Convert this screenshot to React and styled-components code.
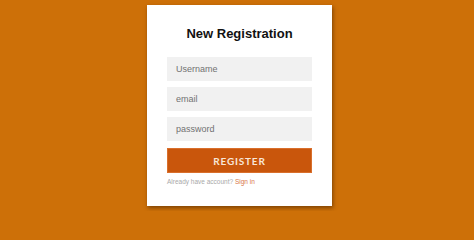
import React, { useCallback, useState } from "react"
import styled, { createGlobalStyle } from "styled-components"

const GlobalStyle = createGlobalStyle`
  html, body {
    margin: 0;
    padding: 0;
    background: #cd7008;
  }
  * {
    box-sizing: border-box;
  }
`

const Page = styled.div`
  width: 474px;
  height: 211px;
  display: flex;
  justify-content: center;
  align-items: flex-start;
  padding-top: 5px;
  padding-left: 5px;
  background: #cd7008;
  font-family: "Liberation Sans", Arial, sans-serif;
`

const Card = styled.div`
  width: 185px;
  height: 201px;
  background: #ffffff;
  box-shadow: 1px 2px 4px rgba(60, 30, 0, 0.55);
  display: flex;
  flex-direction: column;
  align-items: center;
  padding: 0 20px;
`

const Title = styled.h2`
  margin: 21px 0 15px;
  font-size: 13px;
  font-weight: bold;
  color: #111;
  line-height: 16px;
`

const Form = styled.form`
  width: 100%;
  display: flex;
  flex-direction: column;
  gap: 6px;
`

const Input = styled.input`
  width: 100%;
  height: 24px;
  border: none;
  outline: none;
  background: #f1f1f1;
  padding: 0 9px;
  font-family: "Liberation Sans", Arial, sans-serif;
  font-size: 9px;
  color: #555;
  &::placeholder {
    color: #727272;
  }
`

const Button = styled.button`
  margin-top: 1px;
  width: 100%;
  height: 25px;
  border: 1px solid #d96f2c;
  background: #c9560c;
  color: #f8e6d8;
  font-family: Lato, "Liberation Sans", sans-serif;
  font-weight: bold;
  font-size: 10px;
  letter-spacing: 0.8px;
  cursor: pointer;
`

const Footer = styled.div`
  width: 100%;
  margin-top: 5px;
  font-size: 6.5px;
  color: #a9a9a9;
`

const SignIn = styled.a`
  color: #d9784a;
  text-decoration: none;
`

const App = () => {
  const [logs, setLogs] = useState({ username: "", email: "", password: "" })

  const handleChange = useCallback(
    ({ target }) => {
      setLogs({ ...logs, [target.name]: target.value })
    },
    [logs, setLogs]
  )

  return (
    <Page>
      <GlobalStyle />
      <Card>
        <Title>New Registration</Title>
        <Form onSubmit={(e) => e.preventDefault()}>
          <Input name='username' placeholder='Username' value={logs.username} onChange={handleChange} />
          <Input name='email' placeholder='email' value={logs.email} onChange={handleChange} />
          <Input name='password' type='password' placeholder='password' value={logs.password} onChange={handleChange} />
          <Button type='submit'>REGISTER</Button>
        </Form>
        <Footer>
          Already have account? <SignIn href='#'>Sign in</SignIn>
        </Footer>
      </Card>
    </Page>
  )
}

export default App
